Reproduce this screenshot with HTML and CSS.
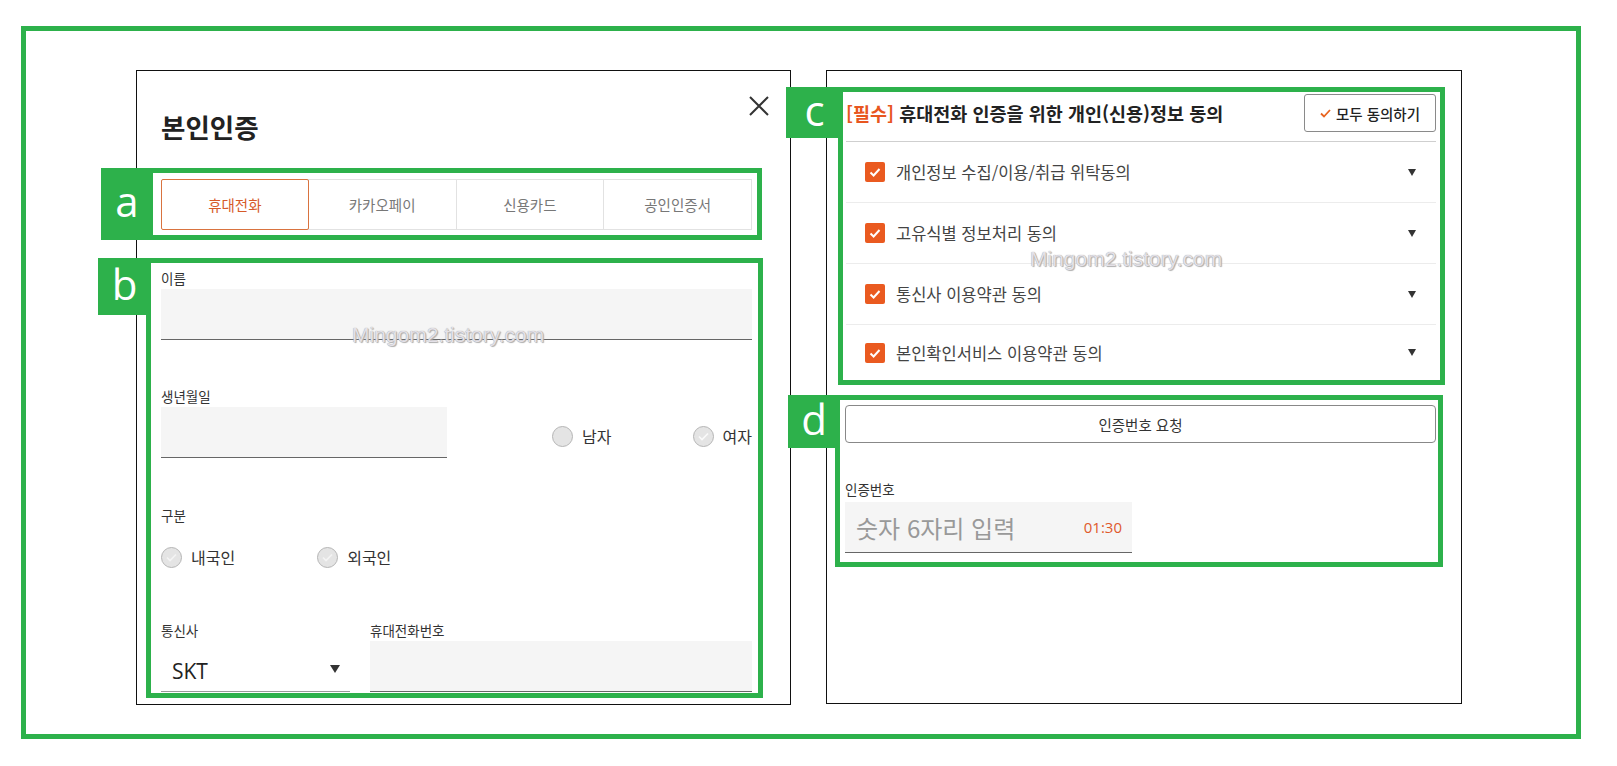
FILE: index.html
```html
<!DOCTYPE html>
<html lang="ko">
<head>
<meta charset="utf-8">
<title>본인인증</title>
<link rel="stylesheet" href="styles.css">
</head>
<body>
<div class="frame">
  <section class="modal modal-left">
    <div class="modal-head">
      <h1 class="title">본인인증</h1>
      <svg class="close" width="20" height="20" viewBox="0 0 20 20"><path d="M1 1 L19 19 M19 1 L1 19" stroke="#333" stroke-width="2" fill="none"/></svg>
    </div>

    <div class="anno anno-a">
      <span class="anno-tag tag-a">a</span>
      <div class="tabs">
        <div class="tab active">휴대전화</div>
        <div class="tab">카카오페이</div>
        <div class="tab">신용카드</div>
        <div class="tab">공인인증서</div>
      </div>
    </div>

    <div class="anno anno-b">
      <span class="anno-tag tag-b">b</span>
      <div class="field">
        <div class="lbl">이름</div>
        <div class="input"></div>
      </div>
      <div class="row-birth">
        <div class="field f-birth">
          <div class="lbl">생년월일</div>
          <div class="input"></div>
        </div>
        <div class="radios radios-gender">
          <div class="radio"><span class="dot"></span>남자</div>
          <div class="radio"><span class="dot"><svg width="19" height="19" viewBox="0 0 19 19"><path d="M5 9.5 L8 12.5 L14 6.5" stroke="#fafafa" stroke-width="1.6" fill="none"/></svg></span>여자</div>
        </div>
      </div>
      <div class="field f-kind">
        <div class="lbl">구분</div>
        <div class="radios radios-kind">
          <div class="radio"><span class="dot"><svg width="19" height="19" viewBox="0 0 19 19"><path d="M5 9.5 L8 12.5 L14 6.5" stroke="#f4f4f4" stroke-width="1.6" fill="none"/></svg></span>내국인</div>
          <div class="radio"><span class="dot"><svg width="19" height="19" viewBox="0 0 19 19"><path d="M5 9.5 L8 12.5 L14 6.5" stroke="#f4f4f4" stroke-width="1.6" fill="none"/></svg></span>외국인</div>
        </div>
      </div>
      <div class="row-carrier">
        <div class="field f-carrier">
          <div class="lbl">통신사</div>
          <div class="select"><span class="select-val">SKT</span><span class="caret"></span></div>
        </div>
        <div class="field f-phone">
          <div class="lbl">휴대전화번호</div>
          <div class="input"></div>
        </div>
      </div>
    </div>
  </section>

  <section class="modal modal-right">
    <div class="anno anno-c">
      <span class="anno-tag tag-c">c</span>
      <div class="agree-head">
        <h2 class="agree-title"><span class="req">[필수]</span> 휴대전화 인증을 위한 개인(신용)정보 동의</h2>
        <div class="btn-all"><svg width="11" height="9" viewBox="0 0 11 9"><path d="M1 4.5 L4 7.5 L10 1" stroke="#e8641f" stroke-width="1.8" fill="none"/></svg>모두 동의하기</div>
      </div>
      <div class="agree-row"><span class="cbox"><svg width="20" height="20" viewBox="0 0 20 20"><path d="M5.5 10.5 L8.6 13.5 L14.5 7" stroke="#fff" stroke-width="2" fill="none"/></svg></span><span class="agree-text">개인정보 수집/이용/취급 위탁동의</span><span class="caret small"></span></div>
      <div class="agree-row"><span class="cbox"><svg width="20" height="20" viewBox="0 0 20 20"><path d="M5.5 10.5 L8.6 13.5 L14.5 7" stroke="#fff" stroke-width="2" fill="none"/></svg></span><span class="agree-text">고유식별 정보처리 동의</span><span class="caret small"></span></div>
      <div class="agree-row"><span class="cbox"><svg width="20" height="20" viewBox="0 0 20 20"><path d="M5.5 10.5 L8.6 13.5 L14.5 7" stroke="#fff" stroke-width="2" fill="none"/></svg></span><span class="agree-text">통신사 이용약관 동의</span><span class="caret small"></span></div>
      <div class="agree-row last"><span class="cbox"><svg width="20" height="20" viewBox="0 0 20 20"><path d="M5.5 10.5 L8.6 13.5 L14.5 7" stroke="#fff" stroke-width="2" fill="none"/></svg></span><span class="agree-text">본인확인서비스 이용약관 동의</span><span class="caret small"></span></div>
    </div>

    <div class="anno anno-d">
      <span class="anno-tag tag-d">d</span>
      <div class="btn-req">인증번호 요청</div>
      <div class="lbl lbl-code">인증번호</div>
      <div class="code-input"><span class="placeholder">숫자 6자리 입력</span><span class="timer">01:30</span></div>
    </div>
  </section>

  <span class="watermark wm-1">Mingom2.tistory.com</span>
  <span class="watermark wm-2">Mingom2.tistory.com</span>
</div>
</body>
</html>
```

FILE: styles.css
```css
* { box-sizing: border-box; }

html, body {
  margin: 0;
  padding: 0;
  background: #fff;
}

body {
  width: 1617px;
  height: 766px;
  overflow: hidden;
  font-family: "Noto Sans CJK KR", "Open Sans", sans-serif;
  color: #333;
}

.frame {
  position: relative;
  width: 1560px;
  height: 713px;
  margin: 26px 0 0 21px;
  border: 5px solid #2db14b;
  padding: 39px 0 0 110px;
  display: flex;
  align-items: flex-start;
  gap: 35px;
}

.modal {
  border: 1px solid #111;
  background: #fff;
}

.modal-left {
  width: 655px;
  height: 635px;
  padding: 0 38px 0 24px;
}

.modal-right {
  width: 636px;
  height: 634px;
  padding: 0;
}

/* header */
.modal-head {
  display: flex;
  justify-content: space-between;
  align-items: flex-start;
  padding-top: 25px;
  margin-right: -17px;
}

.title {
  margin: 15px 0 0 0;
  font-size: 26.5px;
  line-height: 32px;
  font-weight: 700;
  color: #222;
}

.close { display: block; }

/* annotation boxes */
.anno {
  position: relative;
  border: 5px solid #2db14b;
}

.anno-tag {
  position: absolute;
  top: -5px;
  background: #2db14b;
  color: #fff;
  font-family: "Open Sans", "Noto Sans", sans-serif;
  font-size: 42px;
  line-height: 1;
  display: flex;
  align-items: center;
  justify-content: center;
  padding-bottom: 6px;
}

.tag-a { left: -52px; width: 52px; height: 72px; }
.tag-b { left: -53px; width: 53px; height: 57px; }
.tag-c { left: -57px; width: 57px; height: 51px; }
.tag-d { left: -52px; width: 52px; height: 53px; }

.anno-a {
  margin: 25px -10px 0 -13px;
  padding: 6px 5px 5px 8px;
}

.anno-b {
  margin: 18px -11px 0 -15px;
  padding: 6px 6px 1px 10px;
}

.anno-c {
  margin: 16px 16px 0 11px;
  padding: 0 4px 0 3px;
}

.anno-d {
  margin: 10px 18px 0 8px;
  padding: 5px 2px 9px 5px;
}

/* tabs */
.tabs {
  display: grid;
  grid-template-columns: repeat(4, 1fr);
  height: 51px;
}

.tab {
  border: 1px solid #e2e2e2;
  margin-left: -1px;
  display: flex;
  align-items: center;
  justify-content: center;
  font-size: 14.5px;
  color: #777;
}

.tab:first-child { margin-left: 0; }

.tab.active {
  position: relative;
  z-index: 1;
  border-color: #d9733f;
  border-radius: 2px;
  color: #d65a28;
}

/* form fields */
.lbl {
  font-size: 13.5px;
  line-height: 18px;
  color: #333;
  margin-bottom: 2px;
}

.input {
  height: 51px;
  background: #f5f5f5;
  border-bottom: 1px solid #666;
}

.row-birth {
  display: flex;
  align-items: flex-end;
  margin-top: 47px;
}

.f-birth { width: 286px; }

.radios { display: flex; }

.radios-gender {
  margin-left: auto;
  gap: 81px;
  margin-bottom: 11px;
}

.f-kind { margin-top: 48px; }

.radios-kind {
  margin-top: 22px;
  gap: 82px;
}

.radio {
  display: flex;
  align-items: center;
  gap: 9px;
  font-size: 16px;
  line-height: 22px;
  color: #333;
}

.dot {
  width: 21px;
  height: 21px;
  border-radius: 50%;
  background: #e4e4e4;
  border: 1px solid #b5b5b5;
  display: flex;
  align-items: center;
  justify-content: center;
}

.row-carrier {
  display: flex;
  gap: 20px;
  margin-top: 53px;
}

.f-carrier { width: 189px; }
.f-phone { flex: 1; }

.select {
  height: 51px;
  border-bottom: 1px solid #999;
  display: flex;
  align-items: center;
  justify-content: space-between;
  padding: 9px 10px 0 11px;
}

.select-val {
  font-family: "Open Sans", "Noto Sans", sans-serif;
  font-size: 21px;
  color: #222;
}

.caret {
  width: 0;
  height: 0;
  border-left: 5px solid transparent;
  border-right: 5px solid transparent;
  border-top: 8px solid #333;
  margin-top: -4px;
}

.caret.small {
  margin-left: auto;
  margin-top: 0;
  border-left-width: 4.5px;
  border-right-width: 4.5px;
  border-top-width: 7px;
}

/* agreement */
.agree-head {
  display: flex;
  align-items: center;
  justify-content: space-between;
  padding: 2px 0 9px;
  border-bottom: 1px solid #cfcfcf;
}

.agree-title {
  margin: 0;
  font-size: 18.5px;
  line-height: 24px;
  font-weight: 700;
  color: #222;
}

.req { color: #e8561f; }

.btn-all {
  width: 132px;
  height: 38px;
  border: 1px solid #8a8a8a;
  border-radius: 3px;
  display: flex;
  align-items: center;
  justify-content: center;
  gap: 5px;
  font-size: 14.5px;
  font-weight: 500;
  color: #222;
}

.agree-row {
  height: 61px;
  display: flex;
  align-items: center;
  padding: 0 20px 0 19px;
  border-bottom: 1px solid #ececec;
}

.agree-row.last {
  height: 55px;
  border-bottom: none;
}

.cbox {
  width: 20px;
  height: 20px;
  border-radius: 2px;
  background: #ea5a20;
  display: flex;
  margin-right: 11px;
  flex: none;
}

.agree-text {
  font-size: 16.5px;
  color: #444;
}

.btn-req {
  height: 38px;
  border: 1px solid #888;
  border-radius: 4px;
  display: flex;
  align-items: center;
  justify-content: center;
  font-size: 14.5px;
  color: #333;
}

.lbl-code {
  margin-top: 37px;
  margin-bottom: 4px;
}

.code-input {
  width: 287px;
  height: 51px;
  background: #f5f5f5;
  border-bottom: 1px solid #666;
  display: flex;
  align-items: center;
  justify-content: space-between;
  padding: 0 10px 0 11px;
}

.placeholder {
  font-size: 24px;
  color: #999;
}

.timer {
  font-family: "Open Sans", "Noto Sans", sans-serif;
  font-size: 15px;
  color: #df5a2c;
}

/* watermark */
.watermark {
  position: absolute;
  font-family: "Liberation Sans", Arial, sans-serif;
  font-size: 21px;
  line-height: 24px;
  color: #e4e1e8;
  text-shadow: 0 0 1px #8e8e8e, 1px 1px 1px #b0b0b0;
  white-space: nowrap;
}

.wm-1 { left: 326px; top: 292px; }
.wm-2 { left: 1004px; top: 216px; }
```
